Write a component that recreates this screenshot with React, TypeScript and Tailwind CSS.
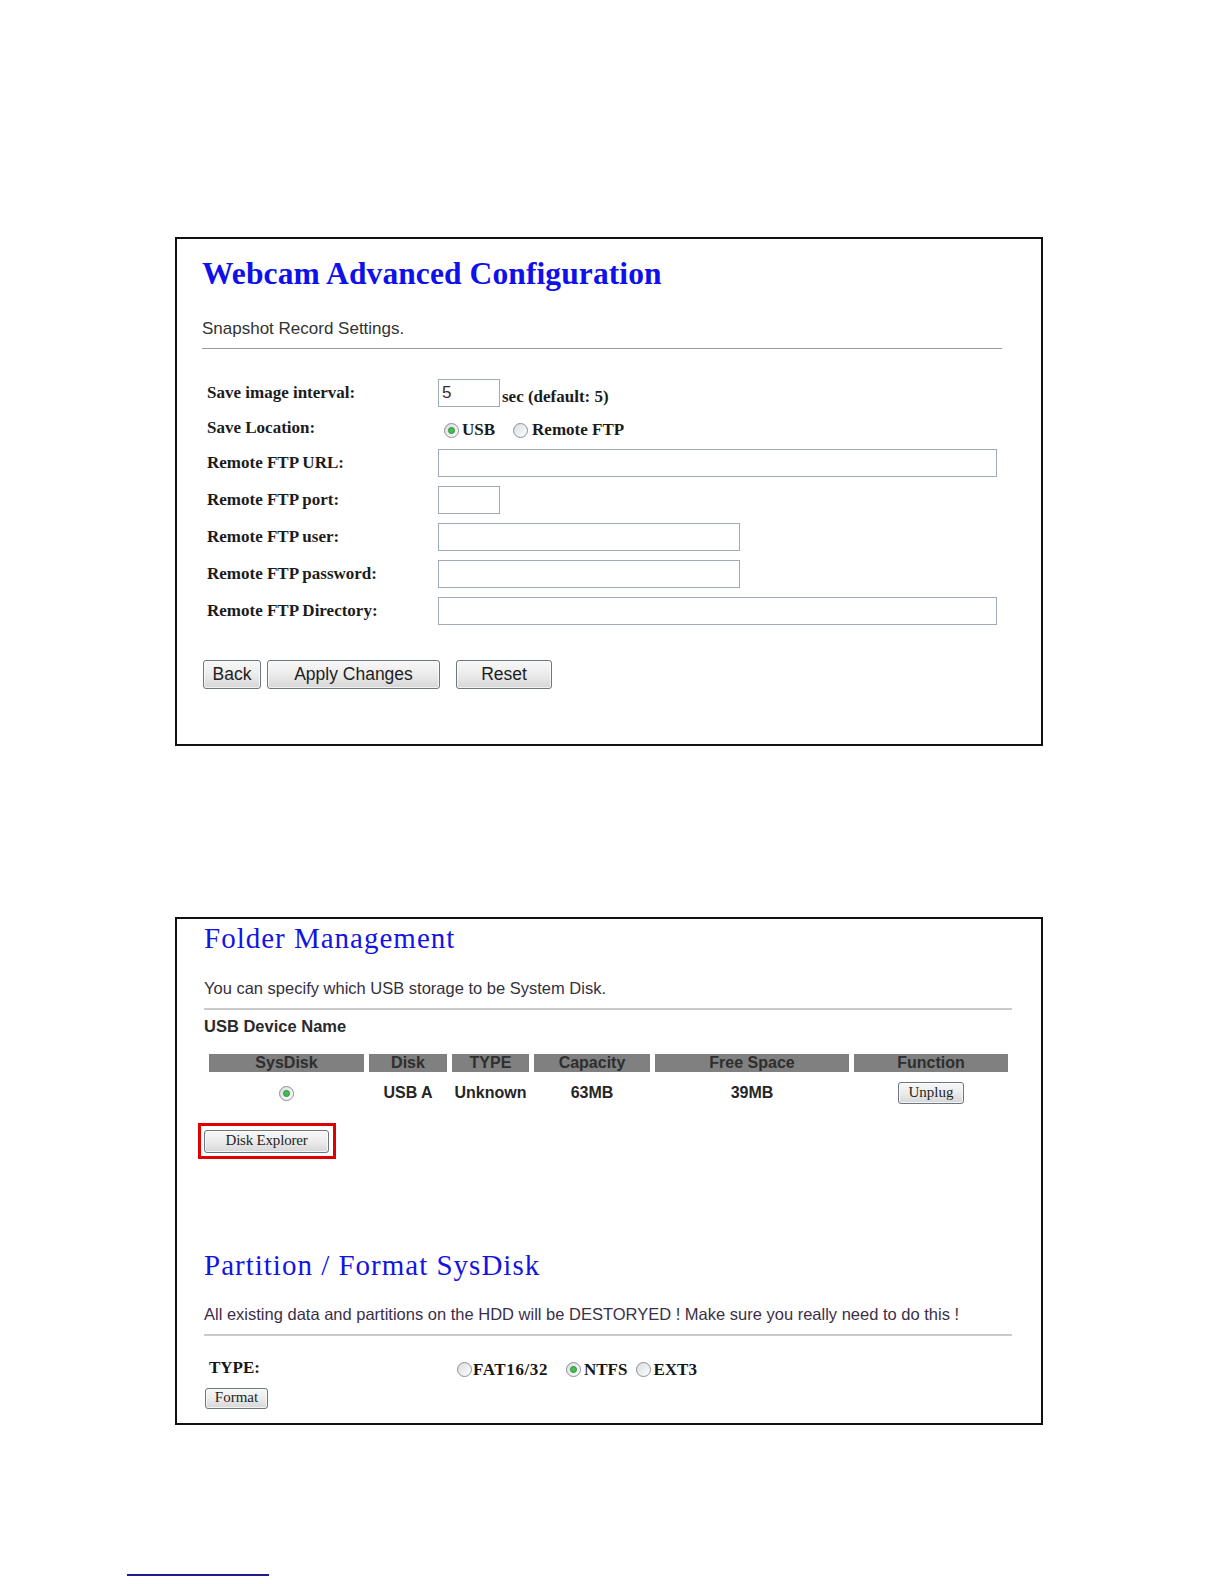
import type { ReactNode } from 'react';

const serif = { fontFamily: '"Liberation Serif", "Times New Roman", serif' };
const sans = { fontFamily: '"Liberation Sans", Arial, sans-serif' };

function Radio({ checked = false }: { checked?: boolean }) {
  return (
    <span className="flex w-[15px] h-[15px] shrink-0 items-center justify-center rounded-full border border-[#8b8f95] bg-linear-to-br from-[#d9dbde] to-[#ffffff]">
      {checked && (
        <span className="block w-[7px] h-[7px] rounded-full border border-[#2f8a37] bg-[#45c04f]" />
      )}
    </span>
  );
}

function TextBox({ width, value }: { width: string; value?: string }) {
  return (
    <div
      className={`${width} h-[28px] border border-[#9fabba] bg-white pl-[3px] flex items-center text-[17px] text-[#3a2a2a]`}
      style={sans}
    >
      {value}
    </div>
  );
}

function WinButton({ className, children, font }: { className: string; children: ReactNode; font: React.CSSProperties }) {
  return (
    <button
      className={`${className} flex items-center justify-center rounded-[3px] border border-[#6b7682] bg-linear-to-b from-[#f7f7f7] via-[#ececec] to-[#d6d6d6] font-normal text-[#1e1e1e] shadow-[inset_0_0_0_1px_rgba(255,255,255,0.7)]`}
      style={font}
    >
      {children}
    </button>
  );
}

function FormRow({ label, h, children }: { label: string; h: string; children: ReactNode }) {
  return (
    <div className={`flex items-center ${h}`}>
      <div className="w-[236px] pl-[5px] text-[17px] font-bold text-[#1c1c1c]" style={serif}>
        {label}
      </div>
      {children}
    </div>
  );
}

const columns = [
  { name: 'SysDisk', w: 'w-[155px]' },
  { name: 'Disk', w: 'w-[78px]' },
  { name: 'TYPE', w: 'w-[77px]' },
  { name: 'Capacity', w: 'w-[116px]' },
  { name: 'Free Space', w: 'w-[194px]' },
  { name: 'Function', w: 'w-[154px]' },
];

export default function App() {
  return (
    <div className="w-[1224px] h-[1584px] bg-white flex flex-col">
      {/* Webcam advanced config */}
      <div className="ml-[175px] mt-[237px] w-[868px] h-[509px] border-2 border-[#111] pl-[25px] pt-[17px]">
        <h1 className="text-[31.5px] leading-[36px] font-bold tracking-[0.1px] text-[#1010ea]" style={serif}>
          Webcam Advanced Configuration
        </h1>
        <p className="mt-[27px] text-[17px] leading-[20px] text-[#333]" style={sans}>
          Snapshot Record Settings.
        </p>
        <div className="mt-[9px] w-[800px] h-px bg-[#9c9c9c]" />

        <div className="mt-[25px]">
          <FormRow label="Save image interval:" h="h-[37px]">
            <div className="flex items-end">
              <TextBox width="w-[62px]" value="5" />
              <span className="ml-[2px] text-[17px] leading-[20px] font-bold text-[#1c1c1c]" style={serif}>
                sec (default: 5)
              </span>
            </div>
          </FormRow>
          <FormRow label="Save Location:" h="h-[33px]">
            <div className="flex items-center pt-[5px] text-[17px] font-bold text-[#1c1c1c]" style={serif}>
              <span className="ml-[6px] flex"><Radio checked /></span>
              <span className="ml-[3px]">USB</span>
              <span className="ml-[18px] flex"><Radio /></span>
              <span className="ml-[4px]">Remote FTP</span>
            </div>
          </FormRow>
          <FormRow label="Remote FTP URL:" h="h-[37px]">
            <TextBox width="w-[559px]" />
          </FormRow>
          <FormRow label="Remote FTP port:" h="h-[37px]">
            <TextBox width="w-[62px]" />
          </FormRow>
          <FormRow label="Remote FTP user:" h="h-[37px]">
            <TextBox width="w-[302px]" />
          </FormRow>
          <FormRow label="Remote FTP password:" h="h-[37px]">
            <TextBox width="w-[302px]" />
          </FormRow>
          <FormRow label="Remote FTP Directory:" h="h-[37px]">
            <TextBox width="w-[559px]" />
          </FormRow>
        </div>

        <div className="mt-[31px] ml-[1px] flex">
          <WinButton className="w-[58px] h-[29px] text-[17.5px]" font={sans}>Back</WinButton>
          <WinButton className="ml-[6px] w-[173px] h-[29px] text-[17.5px]" font={sans}>Apply Changes</WinButton>
          <WinButton className="ml-[16px] w-[96px] h-[29px] text-[17.5px]" font={sans}>Reset</WinButton>
        </div>
      </div>

      {/* Folder management */}
      <div className="ml-[175px] mt-[171px] w-[868px] h-[508px] border-2 border-[#111] pl-[27px] pt-[2px]">
        <h2 className="text-[29px] leading-[34px] tracking-[1px] text-[#1414e2]" style={serif}>
          Folder Management
        </h2>
        <p className="mt-[23px] text-[16.5px] leading-[20px] text-[#35303d]" style={sans}>
          You can specify which USB storage to be System Disk.
        </p>
        <div className="mt-[10px] w-[808px] h-[2px] bg-[#cacaca]" />
        <p className="mt-[6px] text-[16.5px] leading-[20px] font-bold text-[#2a2a2a]" style={sans}>
          USB Device Name
        </p>

        <div className="mt-[18px] ml-[5px]" style={sans}>
          <div className="flex gap-[5px]">
            {columns.map((c) => (
              <div
                key={c.name}
                className={`${c.w} h-[18px] bg-[#808080] flex items-center justify-center text-[16px] font-bold text-[#2e2e2e]`}
              >
                {c.name}
              </div>
            ))}
          </div>
          <div className="mt-[4px] h-[34px] flex gap-[5px] items-center text-[16px] font-bold text-[#262626]">
            <div className="w-[155px] flex justify-center"><Radio checked /></div>
            <div className="w-[78px] text-center">USB A</div>
            <div className="w-[77px] text-center">Unknown</div>
            <div className="w-[116px] text-center">63MB</div>
            <div className="w-[194px] text-center">39MB</div>
            <div className="w-[154px] flex justify-center">
              <WinButton className="w-[66px] h-[22px] text-[15px] leading-none pb-[2px]" font={serif}>Unplug</WinButton>
            </div>
          </div>
        </div>

        <div className="mt-[13px] -ml-[6px] w-[138px] h-[36px] border-[3px] border-[#e10000] pl-[3px] pt-[4px]">
          <WinButton className="w-[125px] h-[23px] text-[15px] leading-none pb-[2px] tracking-[-0.2px]" font={serif}>Disk Explorer</WinButton>
        </div>

        <h2 className="mt-[89px] text-[29px] leading-[34px] tracking-[1px] text-[#1414e2]" style={serif}>
          Partition / Format SysDisk
        </h2>
        <p className="mt-[22px] text-[16.5px] leading-[20px] text-[#3b2f4a]" style={sans}>
          All existing data and partitions on the HDD will be DESTORYED ! Make sure you really need to do this !
        </p>
        <div className="mt-[10px] w-[808px] h-[2px] bg-[#cacaca]" />

        <div className="mt-[20px] h-[24px] flex items-center text-[17px] font-bold text-[#161616]" style={serif}>
          <div className="w-[253px] pl-[5px]">TYPE:</div>
          <div className="flex items-center pt-[3px]">
            <Radio />
            <span className="ml-[1px] tracking-[0.6px]">FAT16/32</span>
            <span className="ml-[18px] flex"><Radio checked /></span>
            <span className="ml-[3px]">NTFS</span>
            <span className="ml-[9px] flex"><Radio /></span>
            <span className="ml-[2px]">EXT3</span>
          </div>
        </div>
        <div className="mt-[8px] ml-[1px]">
          <WinButton className="w-[63px] h-[21px] text-[15px] leading-none pb-[2px]" font={serif}>Format</WinButton>
        </div>
      </div>

      <div className="ml-[127px] mt-[149px] w-[142px] h-[2px] bg-[#1c1c8a]" />
    </div>
  );
}
